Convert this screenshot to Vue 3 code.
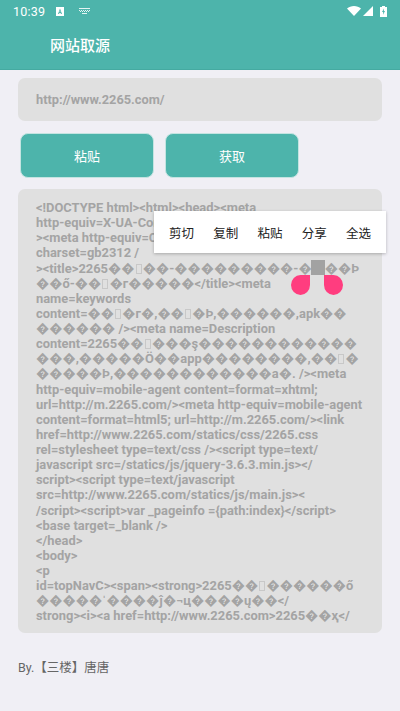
<script setup>
const sourceLines = [
  '<!DOCTYPE html><html><head><meta',
  'http-equiv=X-UA-Compatible content=IE=edge /',
  '><meta http-equiv=Content-Type content=text/html;',
  'charset=gb2312 /',
  '><title>2265��▯��-���������-����Þ',
  '��ő-��▯�г�����</title><meta',
  'name=keywords',
  'content=��▯�г�,��▯�Þ,������,apk��',
  '������ /><meta name=Description',
  'content=2265��▯���ş������������',
  '���,�����Ö��app��������,��▯�',
  '�����Þ,������������a�. /><meta',
  'http-equiv=mobile-agent content=format=xhtml;',
  'url=http://m.2265.com/><meta http-equiv=mobile-agent',
  'content=format=html5; url=http://m.2265.com/><link',
  'href=http://www.2265.com/statics/css/2265.css',
  'rel=stylesheet type=text/css /><script type=text/',
  'javascript src=/statics/js/jquery-3.6.3.min.js></',
  'script><script type=text/javascript',
  'src=http://www.2265.com/statics/js/main.js><',
  '/script><script>var _pageinfo ={path:index}<\/script>',
  '<base target=_blank />',
  '</head>',
  '<body>',
  '<p',
  'id=topNavC><span><strong>2265��▯������ő',
  '�����ˈ����ĵ�¬ц����ų��</',
  'strong><i><a href=http://www.2265.com>2265��ҳ</'
]
// the missing-glyph boxes are thinner and paler than the text around them
const splitLine = (line) => line.split(/(▯)/)
const menuItems = ['剪切', '复制', '粘贴', '分享', '全选']
</script>

<template>
  <div class="page">
    <div class="header">
      <div class="status-bar">
        <span class="clock">10:39</span>
        <svg class="note-a" width="8" height="9" viewBox="0 0 8 9">
          <path fill="#fff" fill-rule="evenodd" d="M0 0h8v9H0zM4 1.500 2 7h1.100l.3-1h1.200l.3 1H6L4 1.500zM4 3.600 4.400 5H3.600z" />
        </svg>
        <svg class="note-kb" width="11" height="6" viewBox="0 0 11 6">
          <path fill="#fff" opacity=".85" d="M0 0h11v1H0zM0 2h1v1H0zM2 2h1v1H2zM4 2h1v1H4zM6 2h1v1H6zM8 2h1v1H8zM10 2h1v1h-1zM1 3h1v1H1zM3 3h1v1H3zM5 3h1v1H5zM7 3h1v1H7zM9 3h1v1H9zM3 5h5v1H3z" />
        </svg>
        <span class="status-gap"></span>
        <svg width="14" height="10" viewBox="0 0 14 10">
          <path fill="#fff" d="M0 2.600C1.900.9 4.300 0 7 0s5.100.9 7 2.600L7 10z" />
        </svg>
        <svg class="signal" width="10" height="10" viewBox="0 0 10 10">
          <path fill="#fff" d="M10 0v10H0z" />
        </svg>
        <svg class="battery" width="7" height="11" viewBox="0 0 7 11">
          <path fill="#fff" fill-rule="evenodd" d="M2 0h3v1h2v10H0V1h2zM4 2.500 2 6h1.200L3 8.800 5 5H3.800z" />
        </svg>
      </div>
      <div class="title">网站取源</div>
    </div>

    <div class="content">
      <div class="url-box">http://www.2265.com/</div>
      <div class="actions">
        <button class="btn">粘贴</button>
        <button class="btn">获取</button>
      </div>
      <div class="source-box">
        <div v-for="(line, i) in sourceLines" :key="i" class="source-line">
          <template v-for="(part, j) in splitLine(line)" :key="j">
            <span v-if="part === '▯'" class="tofu"></span>
            <template v-else>{{ part }}</template>
          </template>
        </div>
      </div>
      <div class="by">By.【三楼】唐唐</div>
    </div>

    <div class="menu">
      <span v-for="item in menuItems" :key="item">{{ item }}</span>
    </div>
    <div class="caret"></div>
    <div class="handle handle-left"></div>
    <div class="handle handle-right"></div>
  </div>
</template>

<style>
html, body {
  margin: 0;
  background: #f0eff5;
}
</style>

<style scoped>
.page {
  position: relative;
  width: 400px;
  height: 711px;
  overflow: hidden;
  background: #f0eff5;
  font-family: Roboto, "Noto Sans CJK SC", sans-serif;
}

.header {
  height: 70px;
  box-sizing: border-box;
  background: #4db4ab;
  border-bottom: 1px solid #45aaa1;
  color: #fff;
}

.status-bar {
  height: 22px;
  display: flex;
  align-items: center;
  padding: 0 13px 0 13px;
}

.clock {
  font-size: 12.5px;
  width: 43px;
  letter-spacing: 0.2px;
}

.note-kb {
  margin-left: 15px;
}

.status-gap {
  flex: 1;
}

.signal {
  margin-left: 2px;
}

.battery {
  margin-left: 7px;
}

.title {
  margin: 2px 0 0 50px;
  font-size: 15px;
  line-height: 44px;
  font-weight: 500;
}

.content {
  padding: 8px 18px 0;
}

.url-box {
  height: 43px;
  box-sizing: border-box;
  padding-left: 18px;
  border-radius: 7px;
  background: #e0e0e0;
  color: #a4a4a4;
  font-size: 12.8px;
  font-weight: 700;
  line-height: 43px;
}

.actions {
  display: flex;
  gap: 11px;
  margin: 12px 0 11px 2px;
}

.btn {
  width: 134px;
  height: 45px;
  padding: 0;
  border: 1px solid #c4e4e1;
  border-radius: 8px;
  background: #4db4ab;
  color: #fff;
  font-family: inherit;
  font-size: 13px;
}

.source-box {
  height: 444px;
  box-sizing: border-box;
  padding: 11px 0 0 18px;
  border-radius: 7px;
  background: #e0e0e0;
  color: #a4a4a4;
  font-size: 12.9px;
  font-weight: 700;
  line-height: 15.14px;
}

.source-line {
  height: 15.14px;
  white-space: nowrap;
}

.tofu {
  display: inline-block;
  box-sizing: border-box;
  width: 6px;
  height: 10px;
  margin: 0 1.200px;
  border: 1px solid #c8c8c8;
  vertical-align: -1px;
}

.by {
  margin-top: 26px;
  color: #666;
  font-size: 12.5px;
  line-height: 18px;
}

.menu {
  position: absolute;
  left: 154px;
  top: 211px;
  width: 232px;
  height: 42px;
  box-sizing: border-box;
  padding: 0 15px;
  display: flex;
  align-items: center;
  justify-content: space-between;
  background: #fff;
  box-shadow: 0 1px 3px rgba(0, 0, 0, 0.25);
  color: #222;
  font-size: 12.5px;
}

.caret {
  position: absolute;
  left: 311px;
  top: 260px;
  width: 14px;
  height: 15px;
  background: #a2a2a2;
}

.handle {
  position: absolute;
  top: 275px;
  width: 19px;
  height: 20px;
  background: #ff3d7f;
}

.handle-left {
  left: 291px;
  border-radius: 50% 0 50% 50%;
}

.handle-right {
  left: 324px;
  border-radius: 0 50% 50% 50%;
}
</style>
